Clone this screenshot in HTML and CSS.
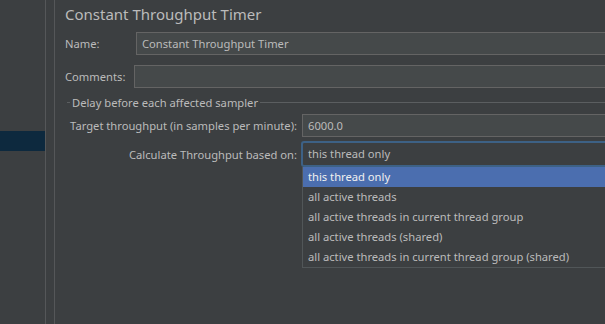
FILE: index.html
```html
<!DOCTYPE html>
<html lang="en">
<head>
    <meta charset="UTF-8">
    <title>Constant Throughput Timer</title>
    <link rel="stylesheet" href="styles.css">
</head>
<body>
    <div class="window">
        <div class="tree">
            <div class="tree-row selected"></div>
        </div>
        <div class="splitter"></div>

        <div class="panel">
            <h1 class="title">Constant Throughput Timer</h1>

            <div class="field-row name-row">
                <label class="field-label">Name:</label>
                <div class="text-field">Constant Throughput Timer</div>
            </div>

            <div class="field-row comments-row">
                <label class="field-label">Comments:</label>
                <div class="text-field"></div>
            </div>

            <div class="group">
                <div class="group-title">
                    <span class="dash"></span>
                    <span class="group-text">Delay before each affected sampler</span>
                    <span class="rule"></span>
                </div>

                <div class="group-grid">
                    <label class="grid-label">Target throughput (in samples per minute):</label>
                    <div class="text-field">6000.0</div>

                    <label class="grid-label">Calculate Throughput based on:</label>
                    <div class="combo-wrap">
                        <div class="combo">this thread only</div>
                        <ul class="popup">
                            <li class="popup-item active">this thread only</li>
                            <li class="popup-item">all active threads</li>
                            <li class="popup-item">all active threads in current thread group</li>
                            <li class="popup-item">all active threads (shared)</li>
                            <li class="popup-item">all active threads in current thread group (shared)</li>
                        </ul>
                    </div>
                </div>
            </div>
        </div>
    </div>
</body>
</html>
```

FILE: styles.css
```css
* {
    margin: 0;
    padding: 0;
    box-sizing: border-box;
}

body {
    background: #3c3f41;
    color: #bbbbbb;
    font-family: "Noto Sans", "Open Sans", sans-serif;
    font-size: 11.2px;
    overflow: hidden;
}

.window {
    display: flex;
    width: 605px;
    height: 324px;
}

/* left tree */
.tree {
    width: 46px;
    padding-top: 131px;
    border-right: 1px solid #555759;
}

.tree-row {
    height: 20px;
}

.tree-row.selected {
    background: #0d293e;
}

.splitter {
    width: 9px;
    border-right: 1px solid #555759;
}

/* main panel */
.panel {
    flex: 1;
    padding-left: 10px;
}

.title {
    font-size: 15px;
    font-weight: normal;
    height: 26px;
    line-height: 26px;
    margin-top: 1px;
}

.field-row {
    display: flex;
    align-items: center;
}

.name-row {
    margin-top: 5px;
}

.name-row .field-label {
    width: 71px;
}

.comments-row {
    margin-top: 10px;
}

.comments-row .field-label {
    width: 69px;
}

.text-field {
    flex: 1;
    height: 23px;
    line-height: 21px;
    padding-left: 5px;
    background: #45494a;
    border: 1px solid #646464;
    border-right: none;
    color: #bbbbbb;
    white-space: nowrap;
}

/* titled border group */
.group {
    margin-top: 6px;
}

.group-title {
    display: flex;
    align-items: center;
    height: 16px;
    margin-left: 2px;
}

.dash {
    width: 3px;
    border-top: 1px solid #5b5e60;
}

.group-text {
    padding: 0 2px;
}

.rule {
    flex: 1;
    border-top: 1px solid #5b5e60;
}

.group-grid {
    display: grid;
    grid-template-columns: 232px 1fr;
    row-gap: 4px;
    padding-left: 5px;
    margin-top: 4px;
    align-items: center;
}

.grid-label {
    text-align: right;
    padding-right: 5px;
    white-space: nowrap;
}

.combo-wrap {
    position: relative;
}

.combo {
    height: 26px;
    line-height: 22px;
    padding-left: 5px;
    margin-left: -1px;
    background: #3c3f41;
    border: 2px solid #3d6185;
    border-right: none;
    border-radius: 3px 0 0 3px;
    color: #bbbbbb;
}

/* dropdown list lies over the panel */
.popup {
    position: absolute;
    top: 26px;
    left: 0;
    right: 0;
    list-style: none;
    background: #3c3f41;
    border: 1px solid #515658;
    border-top: none;
    border-right: none;
}

.popup-item {
    height: 20px;
    line-height: 20px;
    padding-left: 5px;
    white-space: nowrap;
}

.popup-item.active {
    background: #4b6eaf;
    color: #f0f0f0;
}
```
